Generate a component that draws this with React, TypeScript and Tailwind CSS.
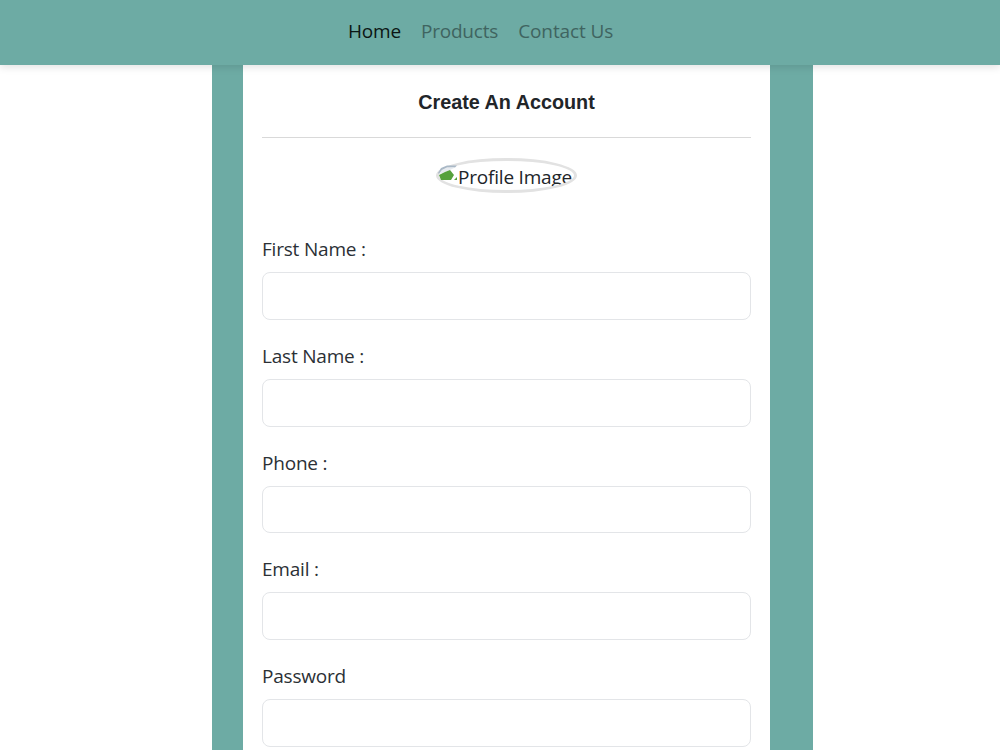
const fields = ['First Name :', 'Last Name :', 'Phone :', 'Email :', 'Password'];

function BrokenImage() {
  return (
    <svg width="21" height="17" viewBox="0 0 21 17" className="absolute left-[1px] top-[7px]">
      <path d="M1 8 L4 3 L10 0.5 H20 L18 2.5 H10 L5 5 L2 9z" fill="#a9b8c6" />
      <path d="M5 5 L10 2.5 H18 L13 5 L6 8 L2 9z" fill="#e6ebf0" />
      <path d="M4 15 L2 10 L8 7 L13 5 L17 10 L14 15z" fill="#55a13c" />
      <path d="M17 15 L20 12 V15z" fill="#55a13c" />
    </svg>
  );
}

export default function App() {
  return (
    <div className="h-[750px] overflow-hidden bg-white font-['Open_Sans','Noto_Sans',sans-serif] text-[#212529]">
      <nav className="relative z-10 flex h-[65px] items-center bg-[#6daba4] pb-[2px] pl-[338px] text-[19px] shadow-[0_2px_8px_rgba(0,0,0,0.12)]">
        <a className="px-[10px] tracking-[-0.2px] text-[#0b1513]">Home</a>
        <a className="px-[10px] tracking-[-0.2px] text-[#3f6460]">Products</a>
        <a className="px-[10px] tracking-[-0.1px] text-[#3f6460]">Contact Us</a>
      </nav>
      <main className="ml-[212px] w-[601px] bg-[#6daba4] pl-[31px] pr-[43px]">
        <section className="h-[685px] bg-white px-[19px]">
          <h1 className="flex h-[73px] items-center justify-center border-b border-[#d9d9d9] pt-[4px] font-['Liberation_Sans',Arial,sans-serif] text-[19.8px] font-bold text-[#212529]">
            Create An Account
          </h1>
          <div className="mt-[20px] flex justify-center">
            <div className="relative h-[35px] w-[141px]">
              <div className="flex h-full items-center overflow-hidden rounded-[50%] border-[3px] border-[#e2e2e2] pl-[19px] text-[19px] leading-[35px] tracking-[-0.2px]">
                <span className="mt-[4px] whitespace-nowrap">Profile Image</span>
              </div>
              <BrokenImage />
            </div>
          </div>
          <form className="mt-[43px] flex flex-col gap-[23px]">
            {fields.map((label) => (
              <div key={label}>
                <label className="block h-[26px] text-[19px] leading-[26px] tracking-[-0.2px] text-[#2b3035]">{label}</label>
                <input className="mt-[10px] block h-[47.8px] w-full rounded-[8px] border border-[#e3e5e8] bg-white" />
              </div>
            ))}
          </form>
        </section>
      </main>
    </div>
  );
}
